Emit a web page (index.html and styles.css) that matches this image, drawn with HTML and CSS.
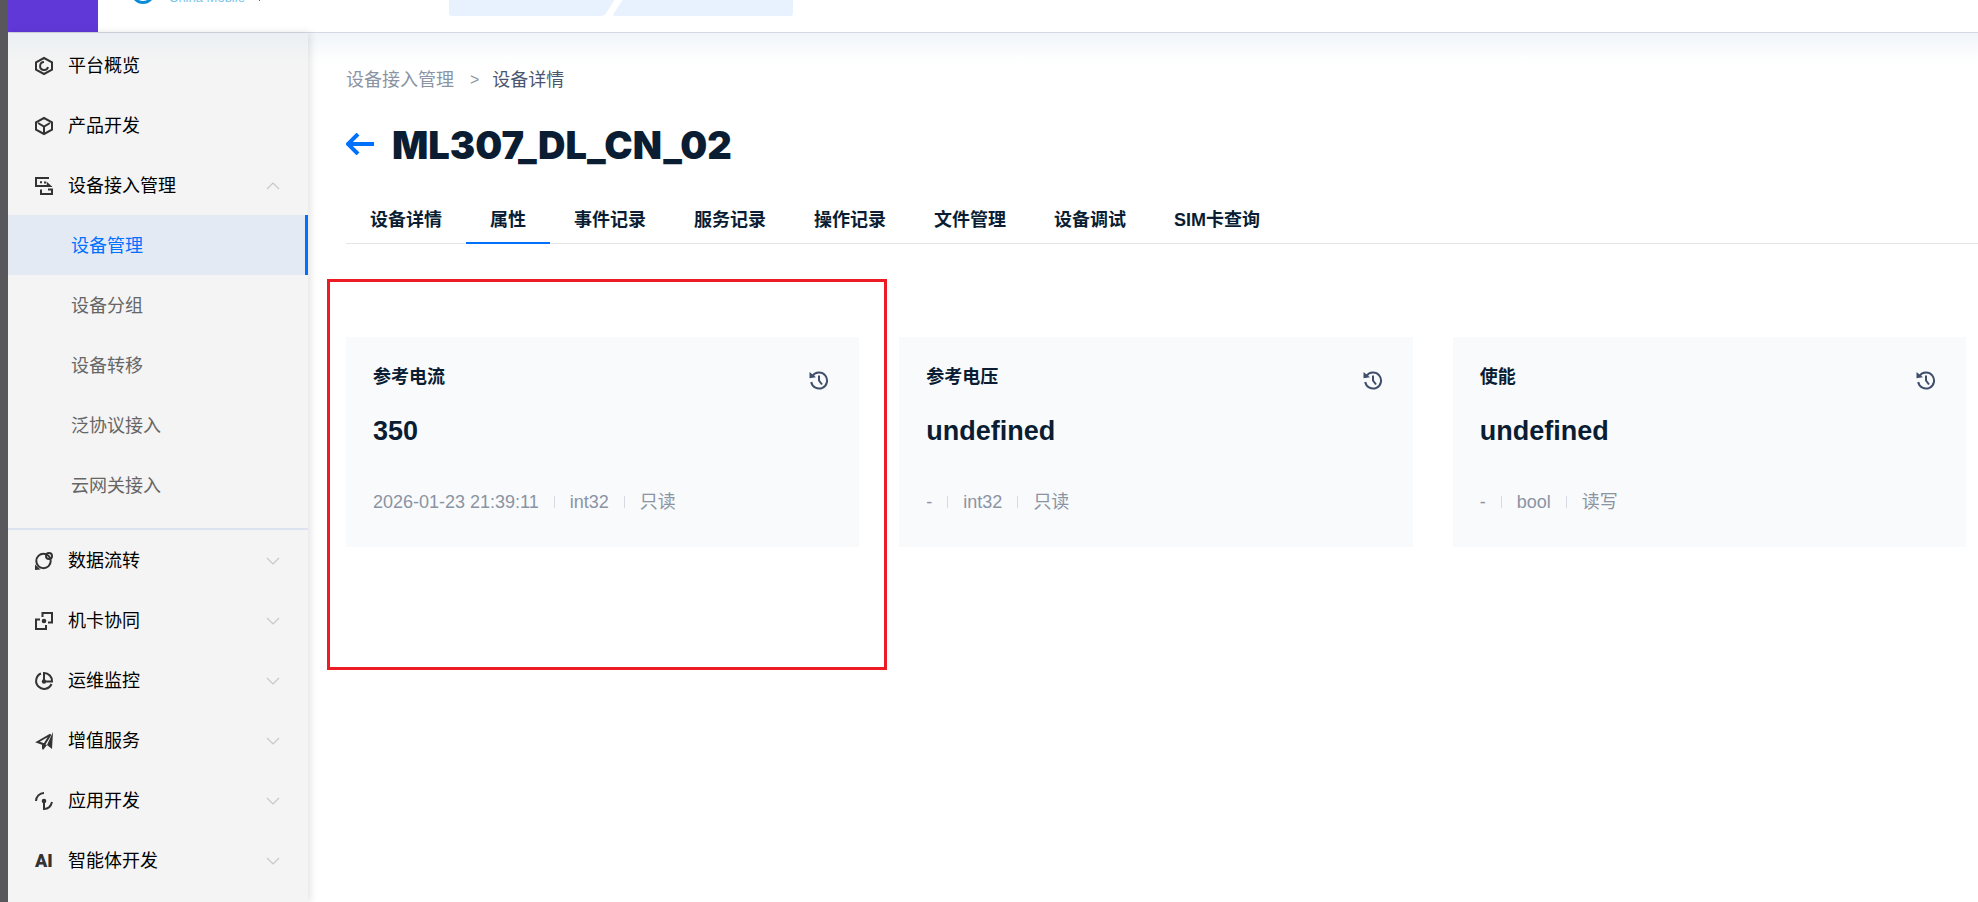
FILE: index.html
```html
<!DOCTYPE html>
<html lang="zh-CN">
<head>
  <meta charset="UTF-8">
  <meta name="viewport" content="width=device-width, initial-scale=1.0">
  <title>设备详情</title>
  <link rel="stylesheet" href="styles.css">
</head>
<body>
  <svg class="sprite" aria-hidden="true">
    <symbol id="chevron" viewBox="0 0 14 8"><path d="M1 1l6 6 6-6" fill="none" stroke="#c8c8c8" stroke-width="1.200"/></symbol>
    <symbol id="history" viewBox="0 0 20 20">
      <path d="M3.500 6A8 8 0 1 1 2.200 12" fill="none" stroke="#3f4f6b" stroke-width="2"/>
      <path d="M.5 2v6.200l6.500-1z" fill="#3f4f6b"/>
      <path d="M10 5.500v5l3 4" fill="none" stroke="#3f4f6b" stroke-width="2"/>
    </symbol>
  </svg>

  <header class="header">
    <div class="menu-block"></div>
    <div class="logo">
      <svg class="logo-mark" viewBox="0 0 24 24"><circle cx="12" cy="12" r="10.500" fill="none" stroke="#0a8bd6" stroke-width="3"/></svg>
      <span class="logo-text">China Mobile</span>
      <span class="logo-line"></span>
    </div>
    <svg class="switch" viewBox="0 0 344 40">
      <path d="M0 0H180L158 36Q156 40 152 40H3Q0 40 0 37Z" fill="#e8f2ff"/>
      <path d="M189 0H344V37Q344 40 341 40H166Q163 40 165 37Z" fill="#e8f2ff"/>
    </svg>
  </header>

  <div class="layout">
    <nav class="sidebar">
      <a class="item" href="#">
        <svg class="icon" viewBox="0 0 18 18"><path d="M9 1l8 4.300v7.400L9 17l-8-4.300V5.300z"/><path d="M9 5a4 4 0 1 0 4 5"/></svg>平台概览
      </a>
      <a class="item" href="#">
        <svg class="icon" viewBox="0 0 18 18"><path d="M9 1l8 4.300v7.400L9 17l-8-4.300V5.300z"/><path d="M3 6l6 3.500L15 6M9 9v8"/></svg>产品开发
      </a>
      <a class="item open" href="#">
        <svg class="icon" viewBox="0 0 18 18"><path d="M14 1H1v8h12"/><path d="M11.500 4.500l6 5.500h-5.500z" class="solid"/><path d="M6 12.500V17h11v-4.500h-4"/><path d="M5 4.300h2v2H5zM9 4.500h2v2H9z" class="solid"/></svg>设备接入管理
        <svg class="arrow"><use href="#chevron"/></svg>
      </a>
      <a class="sub active" href="#">设备管理</a>
      <a class="sub" href="#">设备分组</a>
      <a class="sub" href="#">设备转移</a>
      <a class="sub" href="#">泛协议接入</a>
      <a class="sub" href="#">云网关接入</a>
      <div class="divider"></div>
      <a class="item" href="#">
        <svg class="icon" viewBox="0 0 18 18"><circle cx="8.500" cy="9" r="7.200"/><circle cx="14" cy="4" r="3"/><path d="M0 18v-5.500l5.500 5z" class="solid"/></svg>数据流转
        <svg class="arrow"><use href="#chevron"/></svg>
      </a>
      <a class="item" href="#">
        <svg class="icon" viewBox="0 0 18 18"><path d="M5 7.500H1V17h10v-4M7.500 5V1H17v9.500h-4"/><circle cx="9" cy="9" r="2.300" class="solid"/></svg>机卡协同
        <svg class="arrow"><use href="#chevron"/></svg>
      </a>
      <a class="item" href="#">
        <svg class="icon" viewBox="0 0 18 18"><path d="M6 1.500a8 8 0 1 0 10.500 10.500"/><path d="M9 1v8.500h8A8 8 0 0 0 9 1z"/><circle cx="9" cy="9.500" r="2.200" class="solid"/></svg>运维监控
        <svg class="arrow"><use href="#chevron"/></svg>
      </a>
      <a class="item" href="#">
        <svg class="icon" viewBox="0 0 18 18"><path d="M2.500 10L15.500 2.500 8 14.500V12z"/><path d="M7 11l1 7 4-5zM18 0l-1 17-5-4z" class="solid"/></svg>增值服务
        <svg class="arrow"><use href="#chevron"/></svg>
      </a>
      <a class="item" href="#">
        <svg class="icon" viewBox="0 0 18 18"><path d="M1 9a8 8 0 0 1 8-8M9 9v8c4 0 7-3 8-7"/><circle cx="9" cy="9" r="2.300" class="solid"/></svg>应用开发
        <svg class="arrow"><use href="#chevron"/></svg>
      </a>
      <a class="item" href="#">
        <span class="icon ai">AI</span>智能体开发
        <svg class="arrow"><use href="#chevron"/></svg>
      </a>
    </nav>

    <main class="content">
      <div class="breadcrumb">
        <a href="#">设备接入管理</a>
        <span class="sep">&gt;</span>
        <span>设备详情</span>
      </div>

      <div class="title">
        <button class="back" aria-label="返回">
          <svg viewBox="0 0 28 22"><path d="M12 1L2 11l10 10M2 11h26" fill="none" stroke="#0070ff" stroke-width="4"/></svg>
        </button>
        <h1>ML307_DL_CN_02</h1>
      </div>

      <div class="tabs">
        <button class="tab">设备详情</button>
        <button class="tab active">属性</button>
        <button class="tab">事件记录</button>
        <button class="tab">服务记录</button>
        <button class="tab">操作记录</button>
        <button class="tab">文件管理</button>
        <button class="tab">设备调试</button>
        <button class="tab">SIM卡查询</button>
      </div>

      <div class="cards">
        <div class="card marked">
          <div class="card-head">
            <h3>参考电流</h3>
            <button class="history" aria-label="历史"><svg><use href="#history"/></svg></button>
          </div>
          <div class="value">350</div>
          <div class="meta"><span>2026-01-23 21:39:11</span><span>int32</span><span>只读</span></div>
        </div>
        <div class="card">
          <div class="card-head">
            <h3>参考电压</h3>
            <button class="history" aria-label="历史"><svg><use href="#history"/></svg></button>
          </div>
          <div class="value">undefined</div>
          <div class="meta"><span>-</span><span>int32</span><span>只读</span></div>
        </div>
        <div class="card">
          <div class="card-head">
            <h3>使能</h3>
            <button class="history" aria-label="历史"><svg><use href="#history"/></svg></button>
          </div>
          <div class="value">undefined</div>
          <div class="meta"><span>-</span><span>bool</span><span>读写</span></div>
        </div>
      </div>
    </main>
  </div>
</body>
</html>
```
FILE: styles.css
```css
:root {
  --primary: #0070ff;
  --dark: #0a1d33;
  --gray: #8a94a3;
  --sidebar: #f4f4f4;
}

* {
  box-sizing: border-box;
}

body {
  margin: 0;
  min-height: 100vh;
  display: flex;
  flex-direction: column;
  border-left: 8px solid #57575c;
  background: #fff;
  color: var(--dark);
  font-family: "Liberation Sans", "Noto Sans CJK SC", sans-serif;
  font-size: 18px;
  line-height: 30px;
  overflow: hidden;
}

a {
  color: inherit;
  text-decoration: none;
}

button {
  padding: 0;
  border: none;
  background: none;
  font: inherit;
  color: inherit;
  cursor: pointer;
}

.sprite {
  position: absolute;
  width: 0;
  height: 0;
}

/* header, scrolled up so only its bottom edge shows */
.header {
  height: 33px;
  display: flex;
  align-items: flex-end;
  border-bottom: 1px solid #d5d9e4;
  overflow: hidden;
}

.menu-block {
  width: 90px;
  height: 100%;
  background: #6038d8;
}

.logo {
  width: 351px;
  display: flex;
  align-items: flex-end;
  padding: 0 0 28px 33px;
}

.logo-mark {
  width: 24px;
  height: 24px;
}

.logo-text {
  margin-left: 14px;
  font-size: 13px;
  line-height: 13px;
  color: #7cc4ea;
}

.logo-line {
  width: 1px;
  height: 20px;
  margin: 0 0 3px 14px;
  background: #6a5a9a;
}

.switch {
  width: 344px;
  height: 40px;
  margin-bottom: 16px;
}

.layout {
  flex: 1;
  display: flex;
}

.sidebar {
  position: relative;
  width: 300px;
  flex-shrink: 0;
  padding-top: 2px;
  background: linear-gradient(#ebeff3, var(--sidebar) 30px);
  box-shadow: 2px 0 8px rgba(0, 0, 0, 0.12);
  color: #000;
}

.item,
.sub {
  display: flex;
  align-items: center;
  height: 60px;
  padding-top: 2px;
}

.item {
  padding-left: 27px;
  padding-right: 28px;
}

.icon {
  width: 18px;
  height: 18px;
  margin-right: 15px;
  overflow: visible;
  fill: none;
  stroke: #333;
  stroke-width: 2px;
}

.icon .solid {
  fill: #333;
  stroke: none;
}

.ai {
  font-family: Roboto, sans-serif;
  font-weight: 900;
  line-height: 18px;
  color: #333;
}

.arrow {
  width: 14px;
  height: 8px;
  margin-left: auto;
}

.open .arrow {
  transform: rotate(180deg);
}

.sub {
  padding-left: 63px;
  color: #666;
}

.sub.active {
  background: #e4eaf4;
  border-right: 3px solid var(--primary);
  color: var(--primary);
}

.divider {
  height: 2px;
  margin-top: 13px;
  background: #dce2ee;
}

.content {
  flex: 1;
  padding: 32px 0 0 38px;
  background: linear-gradient(#f1f5f9, #fff 30px);
}

.breadcrumb {
  display: flex;
  color: #4a5670;
}

.breadcrumb a,
.breadcrumb .sep {
  color: var(--gray);
}

.breadcrumb .sep {
  margin: 0 13px 0 16px;
  font-size: 16px;
}

.title {
  display: flex;
  align-items: center;
  margin-top: 24px;
  height: 50px;
}

.back {
  width: 28px;
  height: 22px;
  margin-right: 18px;
}

.back svg {
  display: block;
  width: 28px;
  height: 22px;
}

h1 {
  margin: 0;
  padding-top: 2px;
  font-family: Inter, sans-serif;
  font-size: 38px;
  font-weight: 900;
}

.tabs {
  display: flex;
  margin-top: 27px;
  border-bottom: 1px solid #e4e5e8;
}

.tab {
  height: 48px;
  margin-bottom: -1px;
  padding: 2px 24px 0;
  border-bottom: 2px solid transparent;
  font-weight: bold;
}

.tab.active {
  border-color: var(--primary);
}

.cards {
  display: grid;
  grid-template-columns: repeat(3, 1fr);
  gap: 40px;
  padding: 93px 12px 0 0;
}

.card {
  position: relative;
  height: 210px;
  padding: 24px 27px;
  background: #f9fafc;
}

/* red frame drawn around the card */
.marked::after {
  content: "";
  position: absolute;
  top: -58px;
  right: -28px;
  bottom: -123px;
  left: -19px;
  border: 3px solid #ed1c24;
  pointer-events: none;
}

.card-head {
  display: flex;
  justify-content: space-between;
}

h3 {
  margin: 0;
  font-size: 18px;
  line-height: 32px;
}

.history {
  height: 20px;
  margin: 9px 3px 0 0;
}

.history svg {
  display: block;
  width: 20px;
  height: 20px;
}

.value {
  margin-top: 18px;
  font-size: 27px;
  font-weight: bold;
  line-height: 40px;
}

.meta {
  display: flex;
  align-items: center;
  margin-top: 36px;
  color: var(--gray);
}

.meta span {
  display: flex;
  align-items: center;
}

.meta span + span::before {
  content: "";
  width: 1px;
  height: 12px;
  margin: 0 15px;
  background: #d5dae3;
}
```
